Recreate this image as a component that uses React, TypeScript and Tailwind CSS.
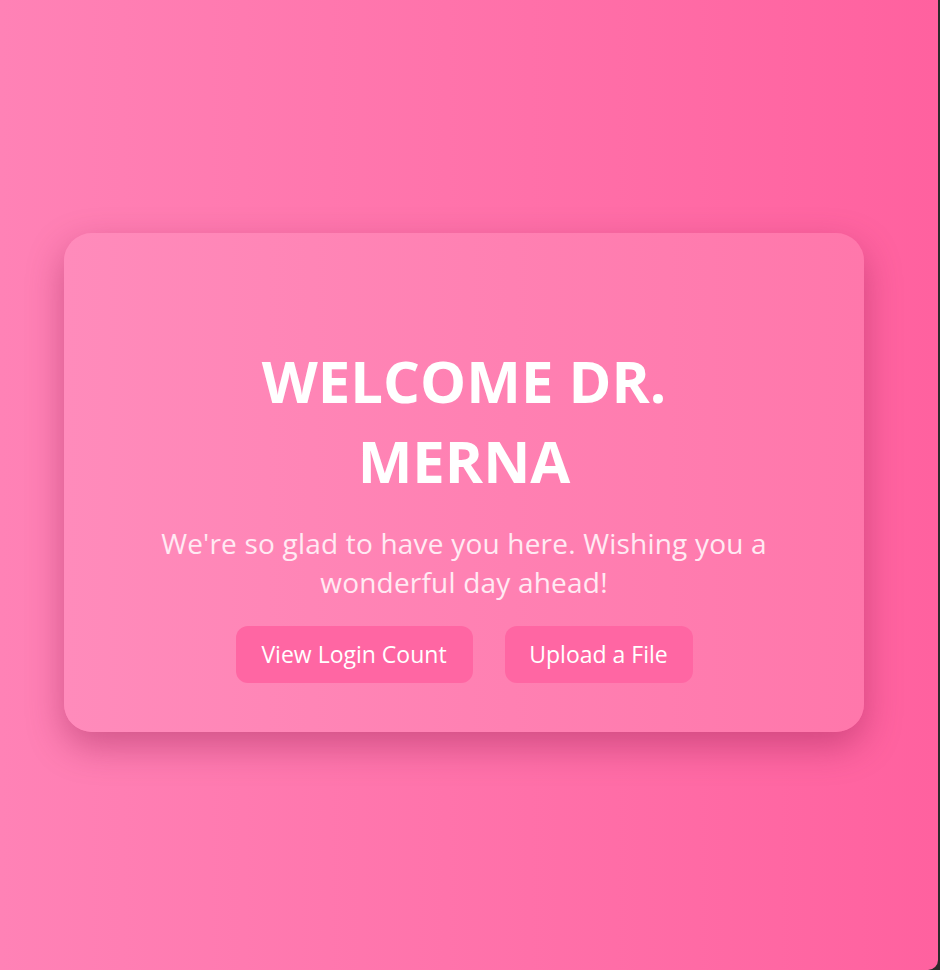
const App: React.FC = () => {
  return (
    <div className="w-[940px] h-[970px] bg-[#2b2b2b] flex">
      <div className="w-[938px] h-[970px] rounded-br-[10px] bg-gradient-to-r from-[#ff82b6] to-[#ff619f] pl-[64px] pt-[233px]">
        <div
          className="w-[800px] h-[499px] rounded-[28px] bg-gradient-to-r from-[#ff8bbb] to-[#ff77ab] shadow-[0_14px_36px_rgba(140,25,75,0.4)] flex flex-col items-center pt-[108px] text-center"
          style={{ fontFamily: '"Open Sans", "Noto Sans", sans-serif' }}
        >
          <h1 className="text-white font-bold text-[58px] leading-[80px] w-[480px]">
            WELCOME DR. MERNA
          </h1>
          <p className="mt-[23px] text-[#ffeaf3] text-[28px] leading-[39px] w-[660px] tracking-[0.2px]">
            We're so glad to have you here. Wishing you a wonderful day ahead!
          </p>
          <div className="mt-[24px] flex gap-[32px]">
            <button className="h-[57px] w-[237px] rounded-[12px] bg-[#ff66a3] text-white text-[23px]">
              View Login Count
            </button>
            <button className="h-[57px] w-[188px] rounded-[12px] bg-[#ff66a3] text-white text-[23px]">
              Upload a File
            </button>
          </div>
        </div>
      </div>
    </div>
  );
};

export default App;
